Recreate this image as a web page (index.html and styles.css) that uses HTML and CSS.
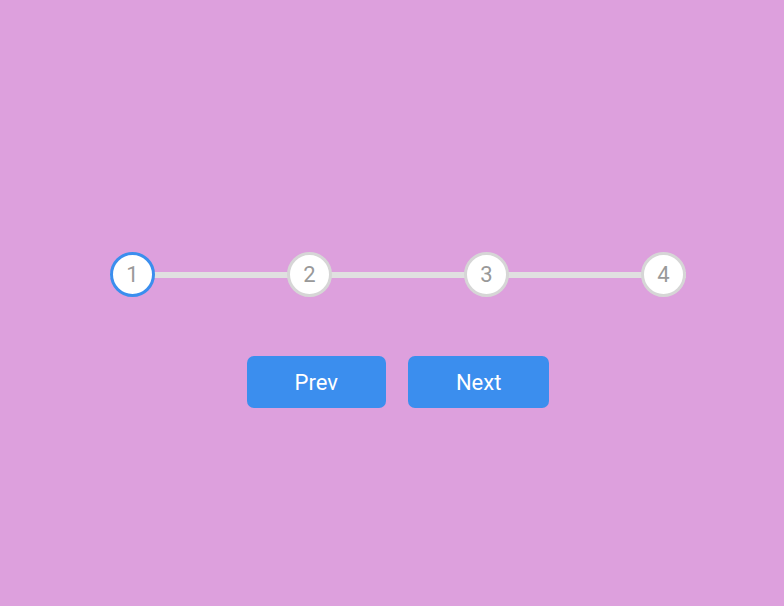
FILE: index.html
```html
<!DOCTYPE html>
<html lang="en">
<head>
<meta charset="utf-8">
<title>Progress Steps</title>
<link rel="stylesheet" href="styles.css">
</head>
<body>
<div class="page">
  <div class="container">
    <div class="progress">
      <div class="track"></div>
      <div class="circle active">1</div>
      <div class="circle">2</div>
      <div class="circle">3</div>
      <div class="circle">4</div>
    </div>
    <div class="actions">
      <button class="btn">Prev</button>
      <button class="btn">Next</button>
    </div>
  </div>
</div>
</body>
</html>
```
FILE: styles.css
```css
* { box-sizing: border-box; }
html, body { margin: 0; padding: 0; }
body {
  background: #dda0dd;
  font-family: Roboto, "Liberation Sans", Arial, sans-serif;
  width: 784px;
  height: 606px;
  overflow: hidden;
}
.page {
  display: flex;
  justify-content: center;
  padding-top: 252px;
  padding-left: 12px;
}
.container {
  display: flex;
  flex-direction: column;
  align-items: center;
  gap: 59px;
}
.progress {
  position: relative;
  width: 576px;
  display: flex;
  justify-content: space-between;
  align-items: center;
}
.track {
  position: absolute;
  left: 0;
  right: 0;
  top: 20px;
  height: 6px;
  background: #e0e0e0;
}
.circle {
  position: relative;
  width: 45px;
  height: 45px;
  border-radius: 50%;
  background: #fff;
  border: 3px solid #d6d6d6;
  color: #999;
  font-size: 22px;
  display: flex;
  align-items: center;
  justify-content: center;
}
.circle.active { border-color: #3b8eee; }
.actions {
  display: flex;
  gap: 22px;
}
.btn {
  height: 52px;
  padding: 0 48px;
  border: none;
  border-radius: 7px;
  background: #3b8eee;
  color: #fff;
  font-family: Roboto, "Liberation Sans", Arial, sans-serif;
  font-size: 22px;
  font-weight: 400;
}
```
